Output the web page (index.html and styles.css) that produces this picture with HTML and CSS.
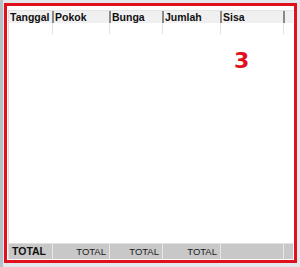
FILE: index.html
```html
<!DOCTYPE html>
<html>
<head>
<meta charset="utf-8">
<link rel="stylesheet" href="styles.css">
</head>
<body>
<div class="screen">
  <div class="frame">
    <div class="grid">
      <div class="row head">
        <div class="cell">Tanggal</div>
        <div class="cell">Pokok</div>
        <div class="cell">Bunga</div>
        <div class="cell">Jumlah</div>
        <div class="cell">Sisa</div>
        <div class="cell rest"></div>
      </div>
      <div class="row empty">
        <div class="cell"></div>
        <div class="cell"></div>
        <div class="cell"></div>
        <div class="cell"></div>
        <div class="cell"></div>
        <div class="cell rest"></div>
      </div>
      <div class="body">
        <span class="mark">3</span>
      </div>
      <div class="row foot">
        <div class="cell first">TOTAL</div>
        <div class="cell num">TOTAL</div>
        <div class="cell num">TOTAL</div>
        <div class="cell num">TOTAL</div>
        <div class="cell"></div>
        <div class="cell rest"></div>
      </div>
    </div>
  </div>
</div>
</body>
</html>
```
FILE: styles.css
```css
html, body {
  margin: 0;
  padding: 0;
}
body {
  width: 300px;
  height: 267px;
  background: #e4e8ec;
  font-family: "Liberation Sans", Arial, sans-serif;
  overflow: hidden;
}
.screen {
  box-sizing: border-box;
  width: 300px;
  height: 267px;
  padding: 3px 3px 4px 1px;
  border-left: 3px solid #b8c0c8;
}
.frame {
  box-sizing: border-box;
  height: 100%;
  border: 3px solid #e0101c;
  background: #ffffff;
  padding: 4px 1px 1px 1px;
}
.grid {
  height: 100%;
  display: flex;
  flex-direction: column;
  border-left: 1px solid #dcdcdc;
}
.row {
  display: grid;
  grid-template-columns: 45px 57px 53px 58px 63px 1fr;
}
.head {
  height: 12px;
  background: #f0f0f0;
  border-top: 1px solid #e4e4e4;
}
.head .cell {
  font-size: 10.5px;
  font-weight: bold;
  line-height: 12px;
  padding-left: 1px;
  color: #111;
  border-right: 2px solid #8a8a8a;
  white-space: nowrap;
  overflow: hidden;
}
.head .cell.rest {
  border-right: none;
}
.empty {
  height: 11px;
}
.empty .cell {
  border-right: 1px solid #e2e2e2;
  margin-right: 1px;
}
.empty .cell.rest {
  border-right: none;
}
.body {
  flex: 1;
  position: relative;
}
.mark {
  position: absolute;
  left: 225px;
  top: 14px;
  color: #e0101c;
  font-size: 22px;
  font-weight: bold;
  font-family: "DejaVu Sans", sans-serif;
}
.foot {
  height: 15px;
  background: #c8c8c8;
  border-top: 1px solid #e0e0e0;
}
.foot .cell {
  font-size: 9.5px;
  line-height: 15px;
  color: #1a1a1a;
  border-right: 1px solid #e6e6e6;
  margin-right: 1px;
}
.foot .cell.first {
  font-size: 10.5px;
  font-weight: bold;
  padding-left: 3px;
  color: #111;
}
.foot .cell.num {
  text-align: right;
  padding-right: 3px;
}
.foot .cell.rest {
  border-right: none;
}
```
